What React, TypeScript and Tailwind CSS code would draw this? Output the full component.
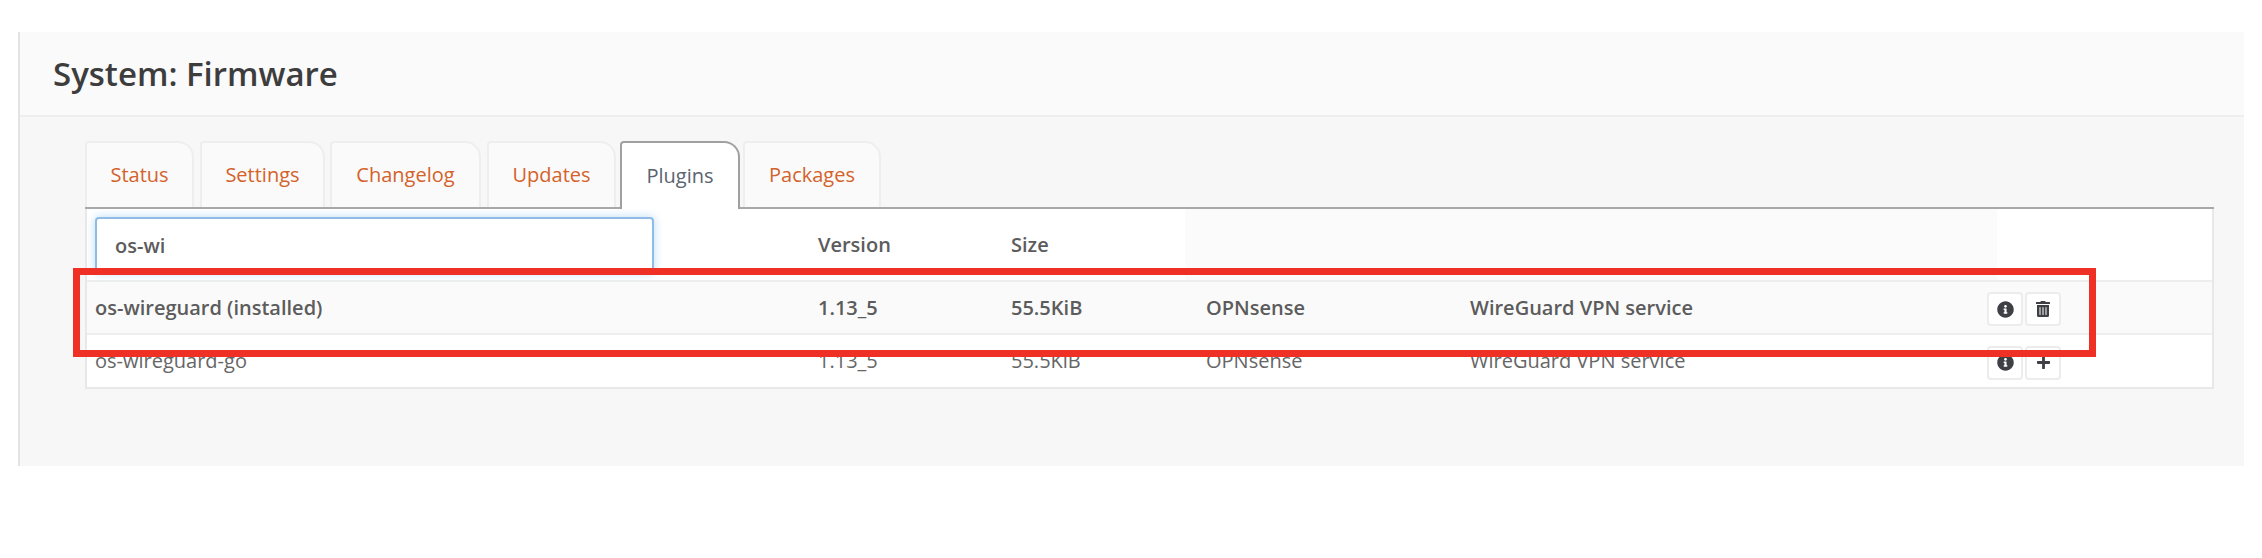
import { FaInfoCircle, FaPlus, FaTrashAlt } from "react-icons/fa";

const font = { fontFamily: '"Open Sans", "Noto Sans", sans-serif' };

const tabs = [
  { label: "Status", cls: "w-[109px] mr-[6px]" },
  { label: "Settings", cls: "w-[125px] mr-[5px]" },
  { label: "Changelog", cls: "w-[151px] mr-[6px]" },
  { label: "Updates", cls: "w-[129px] mr-[4px]" },
  { label: "Plugins", cls: "w-[120px] mr-[3px]", active: true },
  { label: "Packages", cls: "w-[138px]" },
];

const cols = "grid grid-cols-[721px_193px_184px_285px_517px_1fr] items-center";

function IconButton({ children }: { children: React.ReactNode }) {
  return (
    <button className="flex h-[34px] w-[36px] items-center justify-center rounded-[4px] border-2 border-[#ececec] bg-white text-[#3f3f46]">
      {children}
    </button>
  );
}

function Row({
  name,
  action,
  shaded,
  strong,
  height,
}: {
  name: string;
  action: React.ReactNode;
  shaded?: boolean;
  strong?: boolean;
  height: string;
}) {
  return (
    <div
      className={`${cols} ${height} border-t-2 border-[#eeeeee] text-[20px] ${shaded ? "bg-[#fafafa]" : "bg-white"} ${strong ? "font-semibold text-[#5c5c5c]" : "text-[#666666]"}`}
    >
      <div className="pl-[8px]">{name}</div>
      <div className="pl-[10px]">1.13_5</div>
      <div className="pl-[10px]">55.5KiB</div>
      <div className="pl-[21px]">OPNsense</div>
      <div>WireGuard VPN service</div>
      <div className="mt-[3px] flex gap-[2px]">
        <IconButton>
          <FaInfoCircle className="h-[17px] w-[17px]" />
        </IconButton>
        {action}
      </div>
    </div>
  );
}

export default function App() {
  return (
    <div className="relative h-[558px] bg-white pt-[32px] text-[#555555]" style={font}>
      <div className="ml-[18px] mr-[18px] h-[434px] border-l-2 border-[#e3e3e3] bg-[#f7f7f7]">
        <header className="flex h-[85px] items-center border-b-2 border-[#eeeeee] bg-[#fafafa] pl-[33px]">
          <h1 className="text-[33px] font-semibold text-[#3d3d3d]">System: Firmware</h1>
        </header>

        <div className="ml-[65px] mr-[30px] pt-[24px]">
          <nav className="relative z-10 flex h-[68px] border-b-2 border-[#a8a8a8]">
            {tabs.map((t) => (
              <div
                key={t.label}
                className={`flex items-center justify-center rounded-tl-[4px] rounded-tr-[16px] border-2 border-b-0 text-[20px] ${t.cls} ${
                  t.active
                    ? "-mb-[2px] border-[#a0a0a0] bg-white text-[#5a6470]"
                    : "border-[#eeeeee] bg-[#fafafa] text-[#d4622a]"
                }`}
              >
                {t.label}
              </div>
            ))}
          </nav>

          <div className="border-x-2 border-b-2 border-[#e8e8e8] bg-white">
            <div className={`${cols} h-[71px] text-[20px] font-semibold text-[#5c5c5c]`}>
              <div className="pl-[8px]">
                <input
                  readOnly
                  value="os-wi"
                  className="mt-[1px] block h-[56px] w-[559px] rounded-[4px] border-2 border-[#8fbce6] bg-white pl-[18px] text-[20px] font-semibold text-[#5c5c5c] shadow-[0_0_10px_rgba(102,175,233,0.45)] outline-none"
                />
              </div>
              <div className="pl-[10px]">Version</div>
              <div className="pl-[10px]">Size</div>
              <div className="h-full bg-[#fbfbfb]" />
              <div className="h-full bg-[#fbfbfb]" />
              <div className="h-full w-[10px] bg-[#fbfbfb]" />
            </div>
            <Row
              name="os-wireguard (installed)"
              shaded
              strong
              height="h-[53px]"
              action={
                <IconButton>
                  <FaTrashAlt className="h-[16px] w-[16px]" />
                </IconButton>
              }
            />
            <Row
              name="os-wireguard-go"
              height="h-[54px]"
              action={
                <IconButton>
                  <FaPlus className="h-[15px] w-[15px]" />
                </IconButton>
              }
            />
          </div>
        </div>
      </div>

      <div className="pointer-events-none absolute left-[73px] top-[268px] z-20 h-[89px] w-[2023px] border-[7px] border-[#ee3124]" />
    </div>
  );
}
